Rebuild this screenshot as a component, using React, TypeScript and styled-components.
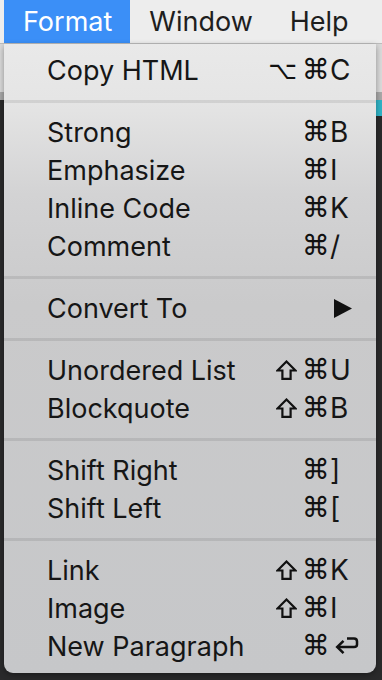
import React from "react";
import styled, { createGlobalStyle } from "styled-components";

const Global = createGlobalStyle`
  html, body { margin: 0; padding: 0; }
  body {
    width: 382px;
    height: 680px;
    overflow: hidden;
    font-family: Inter, "Helvetica Neue", "Liberation Sans", sans-serif;
    background:
      linear-gradient(to bottom, transparent 0 100px, #2fb3c6 100px 116px, transparent 116px) right top / 6px 100% no-repeat,
      linear-gradient(to bottom, #ececec 0 44px, #dadada 44px 92px, #a8a8a8 92px 100px, #2a2a2b 100px);
  }
`;

const Screen = styled.div`
  width: 382px;
  height: 680px;
  display: flex;
  flex-direction: column;
`;

const MenuBar = styled.div`
  height: 43px;
  display: flex;
  align-items: stretch;
  padding-left: 4px;
  background: #ededed;
  border-bottom: 1px solid #bdbdbd;
`;

const BarItem = styled.div<{ $active?: boolean }>`
  display: flex;
  align-items: center;
  padding: 0 18px 0 19px;
  font-size: 27px;
  color: ${(p) => (p.$active ? "#ffffff" : "#1e1e1e")};
  background: ${(p) => (p.$active ? "#3b8ff7" : "transparent")};
`;

const Panel = styled.div`
  margin-left: 4px;
  width: 372px;
  box-sizing: border-box;
  padding: 7px 0 8px;
  border-radius: 0 0 9px 9px;
  background: linear-gradient(
    to bottom,
    #e9e9e9 0,
    #e5e5e5 56px,
    #d3d3d4 150px,
    #cacacb 260px,
    #c6c7c9 100%
  );
  box-shadow: 0 2px 6px rgba(0, 0, 0, 0.35);
`;

const Row = styled.div`
  height: 38px;
  display: grid;
  grid-template-columns: 1fr auto 26px;
  align-items: center;
  padding: 0 20px 0 43px;
  font-size: 27px;
  color: #161616;
`;

const Label = styled.span`
  white-space: nowrap;
`;

const Mods = styled.span`
  display: flex;
  align-items: center;
  justify-content: flex-end;
  gap: 5px;
  line-height: 1;
`;

const Glyph = styled.span<{ $size: number }>`
  font-family: "DejaVu Sans", sans-serif;
  font-size: ${(p) => p.$size}px;
  line-height: 1;
  color: #111;
`;

const ShiftIcon = styled.svg`
  display: block;
  flex-shrink: 0;
`;

const Key = styled.span`
  display: flex;
  align-items: center;
  white-space: nowrap;
  font-size: 28px;
`;

const Separator = styled.div`
  height: 3px;
  margin: 11px 0 10px;
  background: rgba(0, 0, 0, 0.085);
`;

const Arrow = styled.svg`
  margin-left: 4px;
  display: block;
  flex-shrink: 0;
`;

const ReturnIcon = styled.svg`
  margin-left: 5px;
  display: block;
  flex-shrink: 0;
`;

type Item = { label: string; mods?: string[]; key?: string; submenu?: boolean; ret?: boolean };

const groups: Item[][] = [
  [{ label: "Copy HTML", mods: ["⌥", "⌘"], key: "C" }],
  [
    { label: "Strong", mods: ["⌘"], key: "B" },
    { label: "Emphasize", mods: ["⌘"], key: "I" },
    { label: "Inline Code", mods: ["⌘"], key: "K" },
    { label: "Comment", mods: ["⌘"], key: "/" },
  ],
  [{ label: "Convert To", submenu: true }],
  [
    { label: "Unordered List", mods: ["⇧", "⌘"], key: "U" },
    { label: "Blockquote", mods: ["⇧", "⌘"], key: "B" },
  ],
  [
    { label: "Shift Right", mods: ["⌘"], key: "]" },
    { label: "Shift Left", mods: ["⌘"], key: "[" },
  ],
  [
    { label: "Link", mods: ["⇧", "⌘"], key: "K" },
    { label: "Image", mods: ["⇧", "⌘"], key: "I" },
    { label: "New Paragraph", mods: ["⌘"], ret: true },
  ],
];

const Modifier = ({ m }: { m: string }) => {
  if (m === "⇧") {
    return (
      <ShiftIcon width="21" height="20" viewBox="0 0 21 20" aria-label="⇧">
        <path
          d="M10.5 1.5 L19.5 10.5 H14.6 V18.8 H6.4 V10.5 H1.5 Z"
          fill="none"
          stroke="#111"
          strokeWidth="2.2"
        />
      </ShiftIcon>
    );
  }
  return <Glyph $size={m === "⌘" ? 28 : 25}>{m}</Glyph>;
};

const MenuRow = ({ item }: { item: Item }) => (
  <Row>
    <Label>{item.label}</Label>
    <Mods>
      {(item.mods || []).map((m, i) => (
        <Modifier key={i} m={m} />
      ))}
    </Mods>
    <Key>
      {item.key}
      {item.submenu && (
        <Arrow width="18" height="19" viewBox="0 0 18 19">
          <path d="M0 0 L18 9.5 L0 19 Z" fill="#111" />
        </Arrow>
      )}
      {item.ret && (
        <ReturnIcon width="24" height="20" viewBox="0 0 24 20">
          <path
            d="M12 2.5 H19 Q22 2.5 22 5.5 V8.5 Q22 11 19 11 H3"
            fill="none"
            stroke="#111"
            strokeWidth="2.5"
          />
          <path d="M8.5 4.8 L2.2 11 L8.5 17.2" fill="none" stroke="#111" strokeWidth="2.5" />
        </ReturnIcon>
      )}
    </Key>
  </Row>
);

export default function App() {
  return (
    <>
      <Global />
      <Screen>
        <MenuBar>
          <BarItem $active>Format</BarItem>
          <BarItem>Window</BarItem>
          <BarItem>Help</BarItem>
        </MenuBar>
        <Panel>
          {groups.map((g, gi) => (
            <React.Fragment key={gi}>
              {gi > 0 && <Separator />}
              {g.map((item) => (
                <MenuRow key={item.label} item={item} />
              ))}
            </React.Fragment>
          ))}
        </Panel>
      </Screen>
    </>
  );
}
